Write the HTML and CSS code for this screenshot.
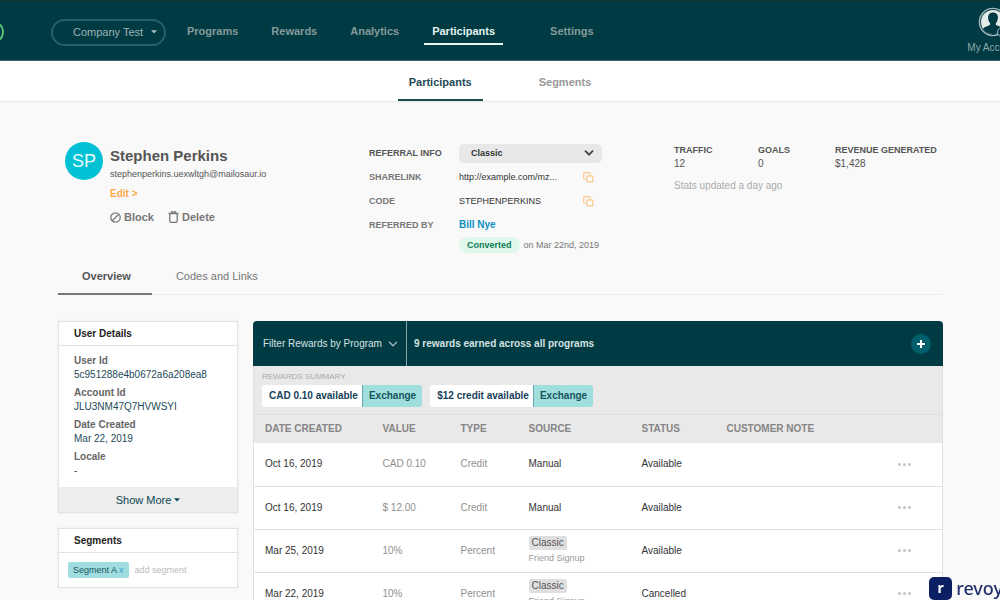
FILE: index.html
```html
<!DOCTYPE html>
<html lang="en">
<head>
    <meta charset="UTF-8">
    <meta name="viewport" content="width=device-width, initial-scale=1.0">
    <title>Stephen Perkins - Participants</title>
    <link rel="stylesheet" href="styles.css">
</head>
<body>
    <header class="topbar">
        <svg class="logo" width="24" height="24" viewBox="0 0 24 24" fill="none">
            <circle cx="12" cy="12" r="11" stroke="#5fd07c" stroke-width="1.6"/>
        </svg>
        <div class="select company">
            <select aria-label="Company">
                <option>Company Test</option>
            </select>
            <svg width="6" height="4" viewBox="0 0 6 4"><path d="M0 0.3h6L3 3.5z" fill="#a9c4c4"/></svg>
        </div>
        <nav class="main-nav">
            <a href="#programs">Programs</a>
            <a href="#rewards">Rewards</a>
            <a href="#analytics">Analytics</a>
            <a href="#participants" class="active">Participants</a>
            <a href="#settings">Settings</a>
        </nav>
        <a href="#account" class="account">
            <svg width="32" height="32" viewBox="0 0 32 32">
                <circle cx="16" cy="16" r="13.6" fill="#003b43" stroke="#a3b9bd" stroke-width="1.4"/>
                <circle cx="16" cy="16" r="12" fill="#e3eae7"/>
                <path d="M6 23c1.500-2.500 4-2.600 6.500-3.800 1-.6.9-1.700.1-2.700-1.200-1.700-1.600-3.500-1.500-5.500.2-3 2.200-4.400 4.900-4.400s4.700 1.400 4.900 4.400c.1 2-.3 3.800-1.500 5.500-.8 1-.9 2.100.1 2.700 2.500 1.200 5 1.300 6.500 3.800-2.500 3.300-6 5-10 5s-7.500-1.700-10-5z" fill="#003b43"/>
                <circle cx="25" cy="26" r="4.500" fill="#003b43" stroke="#a3b9bd"/>
            </svg>
            <span>My Account</span>
        </a>
    </header>

    <nav class="sub-nav">
        <a href="#participants" class="active">Participants</a>
        <a href="#segments">Segments</a>
    </nav>

    <main class="container">
        <section class="profile">
            <div class="person">
                <div class="avatar">SP</div>
                <div>
                    <h1>Stephen Perkins</h1>
                    <p class="email">stephenperkins.uexwltgh@mailosaur.io</p>
                    <a href="#edit" class="edit">Edit &gt;</a>
                    <div class="actions">
                        <button type="button">
                            <svg width="11" height="11" viewBox="0 0 11 11" fill="none" stroke="#777" stroke-width="1.3">
                                <circle cx="5.500" cy="5.500" r="4.700"/><path d="M2.300 8.700l6.400-6.400"/>
                            </svg>
                            Block
                        </button>
                        <button type="button">
                            <svg width="11" height="12" viewBox="0 0 11 12" fill="none" stroke="#777" stroke-width="1.3">
                                <path d="M.5 2.500h10M3.500 2.300V.8h4v1.500M1.800 2.700v7.300q0 1.300 1.300 1.300h4.800q1.300 0 1.300-1.300V2.700"/>
                            </svg>
                            Delete
                        </button>
                    </div>
                </div>
            </div>

            <div class="referral">
                <label for="program" class="label dark">REFERRAL INFO</label>
                <div class="select program">
                    <select id="program">
                        <option>Classic</option>
                    </select>
                    <svg width="10" height="7" viewBox="0 0 10 7" fill="none" stroke="#444" stroke-width="1.8"><path d="M1 1.200l4 4 4-4"/></svg>
                </div>
                <span class="label">SHARELINK</span>
                <div class="copy-row">
                    <span>http://example.com/mz...</span>
                    <button type="button" aria-label="Copy sharelink">
                        <svg width="11" height="11" viewBox="0 0 11 11" fill="none" stroke="#f8c98a" stroke-width="1.200">
                            <rect x="3.900" y="3.900" width="6" height="6" rx="1"/><path d="M2.700 7H1.700q-1 0-1-1V1.700q0-1 1-1H6q1 0 1 1v1"/>
                        </svg>
                    </button>
                </div>
                <span class="label">CODE</span>
                <div class="copy-row">
                    <span>STEPHENPERKINS</span>
                    <button type="button" aria-label="Copy code">
                        <svg width="11" height="11" viewBox="0 0 11 11" fill="none" stroke="#f8c98a" stroke-width="1.200">
                            <rect x="3.900" y="3.900" width="6" height="6" rx="1"/><path d="M2.700 7H1.700q-1 0-1-1V1.700q0-1 1-1H6q1 0 1 1v1"/>
                        </svg>
                    </button>
                </div>
                <span class="label">REFERRED BY</span>
                <a href="#bill-nye" class="referrer">Bill Nye</a>
                <div class="converted">
                    <span class="pill">Converted</span>
                    <span>on Mar 22nd, 2019</span>
                </div>
            </div>

            <div class="stats">
                <dl>
                    <div><dt>TRAFFIC</dt><dd>12</dd></div>
                    <div><dt>GOALS</dt><dd>0</dd></div>
                    <div><dt>REVENUE GENERATED</dt><dd>$1,428</dd></div>
                </dl>
                <p>Stats updated a day ago</p>
            </div>
        </section>

        <nav class="tabs">
            <a href="#overview" class="active">Overview</a>
            <a href="#codes">Codes and Links</a>
        </nav>

        <div class="content">
            <aside>
                <section class="card">
                    <h2>User Details</h2>
                    <dl class="details">
                        <dt>User Id</dt>
                        <dd>5c951288e4b0672a6a208ea8</dd>
                        <dt>Account Id</dt>
                        <dd>JLU3NM47Q7HVWSYI</dd>
                        <dt>Date Created</dt>
                        <dd>Mar 22, 2019</dd>
                        <dt>Locale</dt>
                        <dd>-</dd>
                    </dl>
                    <button type="button" class="show-more">
                        Show More
                        <svg width="6" height="4" viewBox="0 0 6 4"><path d="M0 0.200h6L3 3.600z" fill="#0b4650"/></svg>
                    </button>
                </section>
                <section class="card">
                    <h2>Segments</h2>
                    <div class="segments">
                        <span class="tag">Segment A <button type="button" aria-label="Remove Segment A">x</button></span>
                        <input type="text" placeholder="add segment" aria-label="Add segment">
                    </div>
                </section>
            </aside>

            <section class="rewards">
                <div class="rewards-head">
                    <div class="select filter">
                        <select aria-label="Filter rewards">
                            <option>Filter Rewards by Program</option>
                        </select>
                        <svg width="10" height="7" viewBox="0 0 10 7" fill="none" stroke="#9bb5b9" stroke-width="1.400"><path d="M1 1.200l4 4 4-4"/></svg>
                    </div>
                    <p>9 rewards earned across all programs</p>
                    <button type="button" class="add" aria-label="Add reward">
                        <svg width="8" height="8" viewBox="0 0 8 8" stroke="#fff" stroke-width="2"><path d="M4 0v8M0 4h8"/></svg>
                    </button>
                </div>
                <div class="summary">
                    <h3>REWARDS SUMMARY</h3>
                    <div class="balances">
                        <div class="balance">
                            <span>CAD 0.10 available</span>
                            <button type="button">Exchange</button>
                        </div>
                        <div class="balance">
                            <span>$12 credit available</span>
                            <button type="button">Exchange</button>
                        </div>
                    </div>
                </div>
                <table>
                    <thead>
                        <tr>
                            <th class="col-date">DATE CREATED</th>
                            <th class="col-value">VALUE</th>
                            <th class="col-type">TYPE</th>
                            <th class="col-source">SOURCE</th>
                            <th class="col-status">STATUS</th>
                            <th>CUSTOMER NOTE</th>
                            <th class="col-menu"></th>
                        </tr>
                    </thead>
                    <tbody>
                        <tr>
                            <td>Oct 16, 2019</td>
                            <td class="muted">CAD 0.10</td>
                            <td class="muted">Credit</td>
                            <td>Manual</td>
                            <td>Available</td>
                            <td></td>
                            <td><button type="button" class="more" aria-label="More"><i></i><i></i><i></i></button></td>
                        </tr>
                        <tr>
                            <td>Oct 16, 2019</td>
                            <td class="muted">$ 12.00</td>
                            <td class="muted">Credit</td>
                            <td>Manual</td>
                            <td>Available</td>
                            <td></td>
                            <td><button type="button" class="more" aria-label="More"><i></i><i></i><i></i></button></td>
                        </tr>
                        <tr>
                            <td>Mar 25, 2019</td>
                            <td class="muted">10%</td>
                            <td class="muted">Percent</td>
                            <td><span class="chip">Classic</span><small>Friend Signup</small></td>
                            <td>Available</td>
                            <td></td>
                            <td><button type="button" class="more" aria-label="More"><i></i><i></i><i></i></button></td>
                        </tr>
                        <tr>
                            <td>Mar 22, 2019</td>
                            <td class="muted">10%</td>
                            <td class="muted">Percent</td>
                            <td><span class="chip">Classic</span><small>Friend Signup</small></td>
                            <td>Cancelled</td>
                            <td></td>
                            <td><button type="button" class="more" aria-label="More"><i></i><i></i><i></i></button></td>
                        </tr>
                    </tbody>
                </table>
            </section>
        </div>
    </main>

    <div class="watermark">
        <span class="mark">r</span>
        <span>revoy</span>
    </div>
</body>
</html>
```
FILE: styles.css
```css
* {
    box-sizing: border-box;
}
body {
    margin: 0;
    font-family: "Liberation Sans", Arial, sans-serif;
    font-size: 10px;
    line-height: 16px;
    color: #333;
    background: #f9f9f9;
    height: 100vh;
    overflow: hidden;
}
h1, h2, h3, p, dl, dd {
    margin: 0;
}
a {
    text-decoration: none;
}
button, select, input {
    font: inherit;
    color: inherit;
    border: none;
    background: none;
    padding: 0;
}
svg {
    display: block;
    flex: none;
}
.select {
    position: relative;
}
.select select {
    appearance: none;
    width: 100%;
    height: 100%;
}
.select svg {
    position: absolute;
    top: 50%;
    transform: translateY(-50%);
    pointer-events: none;
}

/* top bar */
.topbar {
    display: flex;
    align-items: center;
    height: 61px;
    background: #003b43;
    border-top: 1px solid #18302f;
    border-bottom: 1px solid #3a666c;
    overflow: hidden;
}
.logo {
    margin: 3px 47px 0 -20px;
}
.company {
    width: 115px;
    height: 27px;
    margin-top: 3px;
    border: 2px solid #28606a;
    border-radius: 14px;
    color: #9db5b6;
    font-size: 11px;
}
.company select {
    padding-left: 20px;
}
.company svg {
    right: 7px;
}
.main-nav {
    display: flex;
    gap: 17px;
    margin-left: 13px;
}
.main-nav a {
    padding: 6px 8px 4px;
    border-bottom: 2px solid transparent;
    color: #85999a;
    font-size: 11px;
    font-weight: bold;
}
.main-nav a.active {
    margin-right: 22px;
    color: #e6f4f0;
    border-color: #e6f4f0;
}
.account {
    display: flex;
    flex-direction: column;
    align-items: center;
    gap: 2px;
    margin: 0 -19px 0 auto;
    color: #8fa9ac;
}
.account span {
    white-space: nowrap;
}

/* second level navigation */
.sub-nav {
    display: flex;
    justify-content: center;
    gap: 45px;
    background: #fff;
    border-bottom: 1px solid #e9e9e9;
}
.sub-nav a {
    padding: 13px 11px 9px;
    border-bottom: 2px solid transparent;
    color: #999;
    font-size: 11px;
    font-weight: bold;
}
.sub-nav a.active {
    color: #1f4a55;
    border-color: #1d4a4c;
}

.container {
    padding: 39px 57px 0 58px;
}

/* participant summary */
.profile {
    display: grid;
    grid-template-columns: 311px 305px 1fr;
}
.person {
    display: flex;
    gap: 7px;
    padding: 1px 0 0 7px;
}
.person > div:last-child {
    padding-top: 4px;
}
.avatar {
    width: 38px;
    height: 38px;
    border-radius: 50%;
    background: #00c2d4;
    color: #e8fbfc;
    font-size: 18px;
    line-height: 38px;
    text-align: center;
}
h1 {
    color: #555;
    font-size: 15px;
    line-height: 20px;
}
.email {
    color: #555;
    font-size: 9px;
}
.edit {
    display: block;
    margin-top: 4px;
    color: #fba94c;
    font-weight: bold;
}
.actions {
    display: flex;
    gap: 14px;
    margin-top: 7px;
}
.actions button {
    display: flex;
    align-items: center;
    gap: 3px;
    color: #777;
    font-size: 11px;
    font-weight: bold;
}
.referral {
    display: grid;
    grid-template-columns: 90px 143px;
    grid-auto-rows: 24px;
    align-items: center;
    font-size: 9px;
}
.label {
    color: #777;
    font-weight: bold;
}
.label.dark {
    color: #555;
}
.program {
    height: 19px;
    border-radius: 5px;
    background: #e8e8e8;
    font-weight: bold;
}
.program select {
    padding-left: 12px;
}
.program svg {
    right: 8px;
}
.copy-row {
    display: flex;
    justify-content: space-between;
    align-items: center;
    padding-right: 8px;
}
.referrer {
    color: #0d8fc4;
    font-size: 10px;
    font-weight: bold;
}
.converted {
    grid-column: 2;
    align-self: start;
    display: flex;
    gap: 4px;
    color: #777;
    white-space: nowrap;
}
.pill {
    padding: 0 8px;
    border-radius: 8px;
    background: #e0f8ec;
    color: #0b7a55;
    font-weight: bold;
}
.stats {
    padding-top: 2px;
}
.stats dl {
    display: grid;
    grid-template-columns: 84px 77px 1fr;
    line-height: 14px;
    color: #555;
}
.stats dt {
    font-size: 9px;
    font-weight: bold;
}
.stats p {
    margin-top: 7px;
    color: #aaa;
}

/* tabs */
.tabs {
    display: flex;
    margin-top: -4px;
    border-bottom: 1px solid #ebebeb;
}
.tabs a {
    margin-bottom: -1px;
    padding: 11px 21px 9px 24px;
    border-bottom: 2px solid transparent;
    color: #777;
    font-size: 11px;
}
.tabs a.active {
    color: #555;
    font-weight: bold;
    border-color: #777;
}

.content {
    display: grid;
    grid-template-columns: 180px 1fr;
    gap: 15px;
    align-items: start;
    margin-top: 26px;
}

/* side cards */
.card {
    margin-bottom: 15px;
    background: #fff;
    border: 1px solid #e2e2e2;
    box-shadow: 0 0 2px #e6e6e6;
}
.card h2 {
    padding: 4px 15px 3px;
    border-bottom: 1px solid #e2e2e2;
    color: #222;
    font-size: 10px;
    line-height: 16px;
}
.details {
    padding: 8px 15px 5px;
    line-height: 14px;
}
.details dt {
    color: #666;
    font-weight: bold;
}
.details dd {
    margin-bottom: 4px;
    color: #1d4a5a;
}
.show-more {
    display: flex;
    justify-content: center;
    align-items: center;
    gap: 3px;
    width: 100%;
    height: 25px;
    background: #ededed;
    color: #0b4650;
    font-size: 11px;
}
.segments {
    display: flex;
    align-items: center;
    gap: 6px;
    padding: 9px;
}
.tag {
    padding: 0 5px;
    border-radius: 2px;
    background: #a0dde0;
    color: #1c5560;
    font-size: 9px;
    white-space: nowrap;
}
.tag button {
    color: #3d9ccc;
}
.segments input {
    flex: 1;
    min-width: 0;
    font-size: 9px;
}
.segments input::placeholder {
    color: #bbb;
}

/* rewards */
.rewards-head {
    display: flex;
    align-items: center;
    height: 45px;
    padding-right: 12px;
    border-radius: 4px 4px 0 0;
    background: #003b43;
    color: #d5e2e2;
}
.filter {
    width: 154px;
    height: 100%;
    border-right: 1px solid #8aa7aa;
}
.filter select {
    padding-left: 10px;
}
.filter svg {
    right: 8px;
}
.rewards-head p {
    margin: 0 auto 0 7px;
    font-weight: bold;
}
.add {
    display: flex;
    justify-content: center;
    align-items: center;
    width: 20px;
    height: 20px;
    border-radius: 50%;
    background: #005f6b;
}
.summary {
    padding: 3px 8px 7px;
    background: #eae9ea;
    border: 1px solid #dedede;
    border-top: none;
}
.summary h3 {
    color: #aaa;
    font-size: 8px;
    font-weight: normal;
    line-height: 16px;
}
.balances {
    display: flex;
    gap: 8px;
}
.balance {
    display: flex;
    border-radius: 3px;
    overflow: hidden;
    line-height: 22px;
    font-weight: bold;
}
.balance span {
    padding: 0 4px 0 7px;
    background: #fff;
    color: #173f5a;
}
.balance button {
    padding: 0 6px;
    border-left: 1px solid #6aa5a8;
    background: #a0dfde;
    color: #17555c;
}
table {
    width: 100%;
    table-layout: fixed;
    border-collapse: collapse;
    background: #fff;
    border: 1px solid #dedede;
    border-top: none;
}
th, td {
    padding: 0 0 0 11px;
    text-align: left;
    white-space: nowrap;
}
th {
    height: 28px;
    background: #eae9ea;
    color: #858585;
}
td {
    height: 43px;
    border-bottom: 1px solid #dedede;
}
.col-date {
    width: 118px;
}
.col-value {
    width: 78px;
}
.col-type {
    width: 68px;
}
.col-source {
    width: 113px;
}
.col-status {
    width: 85px;
}
.col-menu {
    width: 56px;
}
.muted {
    color: #8f8f8f;
}
.chip {
    display: block;
    width: fit-content;
    padding: 0 3px;
    border-radius: 2px;
    background: #dfdfdf;
    color: #555;
    line-height: 14px;
}
td small {
    display: block;
    color: #999;
    font-size: 9px;
}
.more {
    display: flex;
    gap: 2px;
}
.more i {
    width: 3px;
    height: 3px;
    border-radius: 50%;
    background: #c4c4c4;
}

/* corner brand */
.watermark {
    position: fixed;
    right: -3px;
    bottom: 0;
    display: flex;
    align-items: center;
    gap: 4px;
    color: #24306e;
    font-family: "Noto Sans", "Open Sans", sans-serif;
    font-size: 18px;
    font-weight: 500;
    line-height: 24px;
}
.mark {
    width: 23px;
    height: 23px;
    border-radius: 5px;
    background: #0c1f63;
    color: #fff;
    font-size: 14px;
    font-weight: bold;
    line-height: 21px;
    text-align: center;
}
```
